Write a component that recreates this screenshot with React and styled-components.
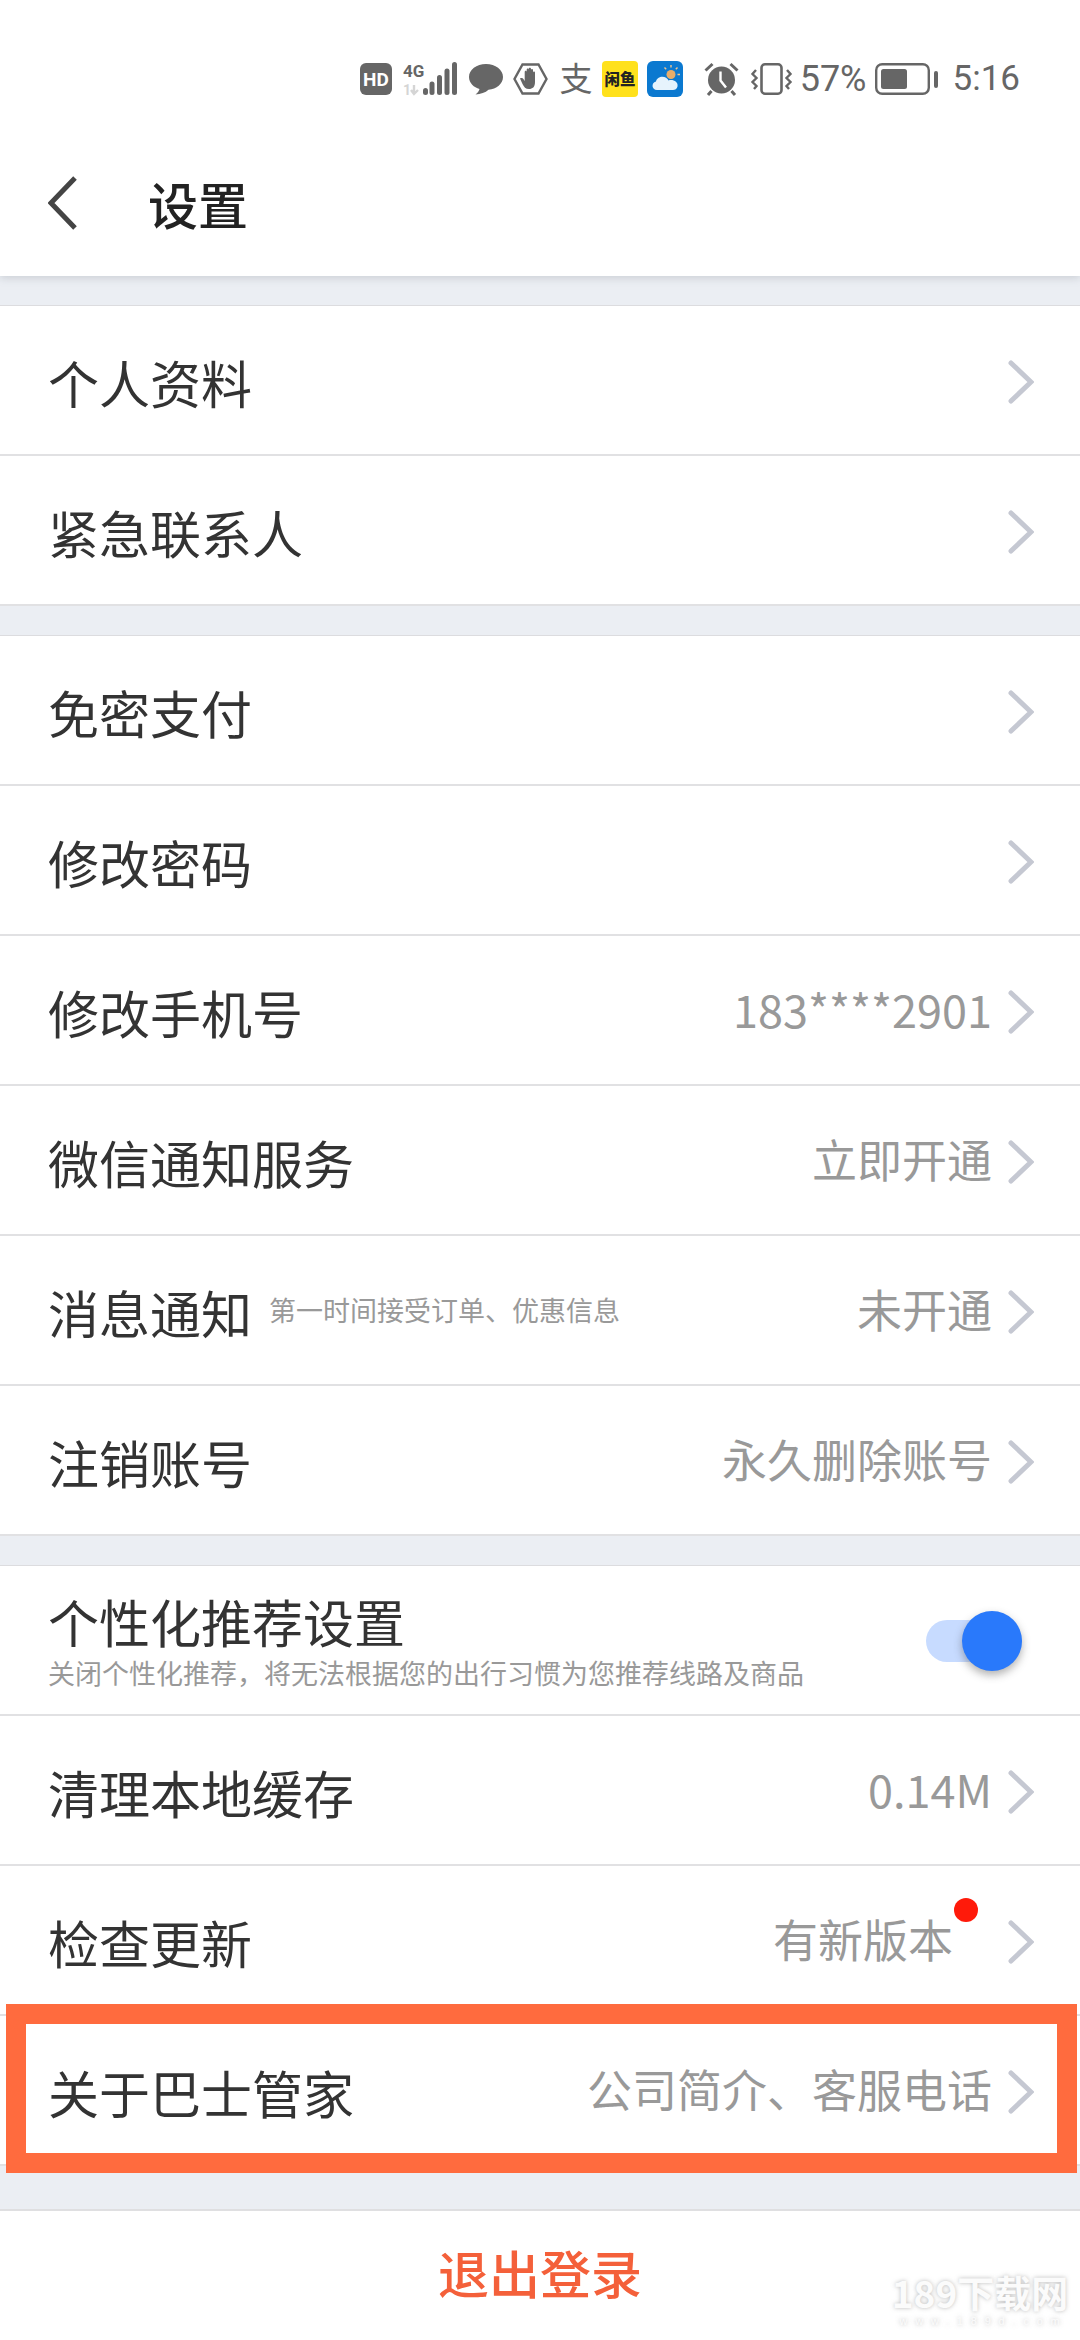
import React from "react";
import styled, { createGlobalStyle } from "styled-components";

const Global = createGlobalStyle`
  html, body { margin: 0; padding: 0; background: #ebeef3; }
  body { font-family: "Noto Sans CJK SC", "Noto Sans", sans-serif; }
  * { box-sizing: border-box; }
`;

const Page = styled.div`
  position: relative;
  width: 1080px;
  height: 2340px;
  overflow: hidden;
  background: #ebeef3;
  display: flex;
  flex-direction: column;
`;

const Header = styled.header`
  height: 276px;
  background: #fff;
  box-shadow: 0 2px 8px rgba(120, 125, 135, 0.28);
  position: relative;
  z-index: 2;
  display: flex;
  flex-direction: column;
`;

const StatusBar = styled.div`
  height: 130px;
  padding: 28px 60px 0 0;
  display: flex;
  justify-content: flex-end;
  align-items: center;
  color: #666;
`;

const StatusSvg = styled.svg`
  display: block;
  flex: none;
  overflow: visible;
  margin-left: ${(p) => p.$ml || 0}px;
`;

const StatusText = styled.span`
  font-family: "Roboto", "Noto Sans", sans-serif;
  font-size: ${(p) => p.$size || 36}px;
  line-height: 44px;
  color: #666;
  margin-left: ${(p) => p.$ml || 0}px;
`;

const NavBar = styled.div`
  height: 146px;
  padding: 0 0 0 48px;
  display: flex;
  align-items: center;
`;

const BackSvg = styled.svg`
  display: block;
  flex: none;
`;

const Title = styled.h1`
  margin: 0 0 0 70px;
  font-size: 50px;
  line-height: 60px;
  font-weight: 500;
  color: #222;
`;

const Group = styled.section`
  background: #fff;
  margin-top: 29px;
  border-top: 1px solid #dcdcdf;
`;

const Row = styled.div`
  position: relative;
  height: 150px;
  padding: 0 46px 0 48px;
  display: flex;
  align-items: center;
  justify-content: space-between;
  border-bottom: 2px solid #e1e1e3;
`;

const Label = styled.span`
  font-size: 51px;
  line-height: 60px;
  color: #333;
  white-space: nowrap;
  margin-top: 3px;
`;

const LabelGroup = styled.div`
  display: flex;
  align-items: center;
`;

const Hint = styled.span`
  font-size: 27px;
  line-height: 40px;
  color: #999;
  margin: 0 0 0 17px;
  white-space: nowrap;
`;

const Stack = styled.div`
  display: flex;
  flex-direction: column;
  margin-top: 3px;
`;

const StackLabel = styled(Label)`
  margin-top: 0;
`;

const StackHint = styled.span`
  font-size: 27px;
  line-height: 40px;
  margin-top: 2px;
  color: #999;
  white-space: nowrap;
`;

const RightSide = styled.div`
  display: flex;
  align-items: center;
`;

const Value = styled.span`
  position: relative;
  margin-right: ${(p) => p.$mr || 16}px;
  font-size: 45px;
  line-height: 60px;
  color: #999;
  white-space: nowrap;
  margin-top: -3px;
`;

const Dot = styled.i`
  position: absolute;
  right: -25px;
  top: -11px;
  width: 24px;
  height: 24px;
  border-radius: 50%;
  background: #ff1a0a;
`;

const Toggle = styled.div`
  position: relative;
  width: 96px;
  height: 42px;
  margin: 2px 12px 0 0;
  border-radius: 21px;
  background: #c7dbff;
`;

const Thumb = styled.i`
  position: absolute;
  right: 0;
  top: -9px;
  width: 60px;
  height: 60px;
  border-radius: 50%;
  background: #2979fb;
  box-shadow: 0 4px 8px rgba(60, 60, 60, 0.4);
`;

const Highlight = styled.div`
  position: absolute;
  left: 6px;
  right: 3px;
  top: -12px;
  bottom: -9px;
  border: 20px solid #ff6b3e;
  pointer-events: none;
`;

const LastRowWrap = styled.div`
  position: relative;
  z-index: 1;
`;

const Logout = styled.div`
  margin-top: 43px;
  flex: 1;
  background: #fff;
  border-top: 2px solid #dfdfe1;
  display: flex;
  justify-content: center;
  padding-top: 31px;
  font-size: 51px;
  line-height: 60px;
  font-weight: 500;
  color: #f4603a;
`;

const Watermark = styled.div`
  position: absolute;
  left: 894px;
  top: 2270px;
  width: 172px;
  display: flex;
  flex-direction: column;
  align-items: center;
  color: #fbfbfb;
  text-shadow: 0 0 4px rgba(120, 120, 120, 0.5);
  pointer-events: none;
`;

const WmMain = styled.span`
  font-family: "Noto Sans CJK SC", sans-serif;
  font-size: 37px;
  line-height: 44px;
  font-weight: 700;
  white-space: nowrap;
`;

const WmSub = styled.span`
  font-family: "Liberation Sans", sans-serif;
  font-size: 11px;
  line-height: 14px;
  letter-spacing: 7.8px;
  white-space: nowrap;
  margin-right: -7px;
`;

const ChevronSvg = styled.svg`
  display: block;
  flex: none;
  margin-top: 3px;
`;

const Chevron = () => (
  <ChevronSvg width="26" height="44" viewBox="0 0 26 44">
    <path d="M3 3 L23 22 L3 41" fill="none" stroke="#c5c8d2" strokeWidth="5" strokeLinecap="round" />
  </ChevronSvg>
);

const BackIcon = () => (
  <BackSvg width="30" height="54" viewBox="0 0 30 54">
    <path d="M27 2 L3 27 L27 52" fill="none" stroke="#444" strokeWidth="5" />
  </BackSvg>
);

const G = "#666";

const StatusIcons = () => (
  <>
    <StatusSvg width="32" height="32" viewBox="0 0 32 32">
      <rect width="32" height="32" rx="6" fill={G} />
      <text x="16" y="23" textAnchor="middle" fontFamily="Roboto, sans-serif" fontWeight="700" fontSize="19" fill="#fff">HD</text>
    </StatusSvg>
    <StatusSvg $ml={11} width="54" height="34" viewBox="0 0 54 34">
      <text x="0" y="15" fontFamily="Roboto, sans-serif" fontWeight="700" fontSize="17" fill={G}>4G</text>
      <text x="0" y="33" fontFamily="Roboto, sans-serif" fontWeight="700" fontSize="14" fill="#d5d5d5">1</text>
      <path d="M11 23 V32 M8 28 L11 32 L15 28" fill="none" stroke="#d5d5d5" strokeWidth="2.4" />
      <rect x="20" y="26" width="5" height="7" rx="2.5" fill={G} />
      <rect x="26.5" y="19.5" width="5" height="13.5" rx="2.5" fill={G} />
      <rect x="34" y="13" width="5" height="20" rx="2.5" fill={G} />
      <rect x="41.5" y="6.5" width="5" height="26.5" rx="2.5" fill={G} />
      <rect x="49" y="0" width="5" height="33" rx="2.5" fill={G} />
    </StatusSvg>
    <StatusSvg $ml={12} width="34" height="32" viewBox="0 0 34 32">
      <path d="M17 1 C7.5 1 0 6.8 0 14 C0 20 5 24.5 10.5 26 C10 28 8.5 30 6.5 31.5 C11.5 31.5 16.5 29.5 19.5 26.8 C27.5 26 34 20.8 34 14 C34 6.8 26.5 1 17 1 Z" fill={G} />
    </StatusSvg>
    <StatusSvg $ml={10} width="35" height="32" viewBox="0 0 35 32">
      <path d="M9.5 1.5 H25.5 L33.5 16 L25.5 30.5 H9.5 L1.5 16 Z" fill="none" stroke={G} strokeWidth="2.4" />
      <path d="M7 15.5 C8.5 14.5 10 15 11 17 L11.7 18 V9 C11.7 7.4 13.7 7.4 13.7 9 V6.8 C13.7 5.2 15.7 5.2 15.7 6.8 V6 C15.7 4.4 18 4.4 18 6 V7 C18 5.5 20 5.5 20 7 V9.5 C20 8 22 8 22 9.5 V19 C22 24 19.5 26 16 26 C12.5 26 11 24 9.5 21 Z" fill={G} />
    </StatusSvg>
    <StatusSvg $ml={11} width="34" height="34" viewBox="0 0 34 34">
      <text x="17" y="29" textAnchor="middle" fontFamily="'Noto Sans CJK SC', sans-serif" fontWeight="400" fontSize="33" fill={G}>支</text>
    </StatusSvg>
    <StatusSvg $ml={9} width="36" height="36" viewBox="0 0 36 36">
      <rect width="36" height="36" rx="4" fill="#ffe11c" />
      <text x="18" y="24" textAnchor="middle" fontFamily="'Noto Sans CJK SC', sans-serif" fontWeight="900" fontSize="15.5" fill="#222">闲鱼</text>
    </StatusSvg>
    <StatusSvg $ml={9} width="36" height="36" viewBox="0 0 36 36">
      <rect width="36" height="36" rx="6" fill="#0b79d0" />
      <circle cx="24" cy="13.5" r="4.5" fill="#e7ad6a" />
      <path d="M24 4 V6.5 M30.5 6.5 L28.8 8.3 M33 13.5 H30.5 M17.5 6.5 L19.2 8.3" stroke="#f0c58f" strokeWidth="1.4" />
      <path d="M10 29 C4.5 29 4 21.5 9 20.5 C10 14.5 19.5 14 21.5 19.5 C26 18 31.5 21 30.5 25.5 C30 28 28 29 26 29 Z" fill="#e6f3fc" />
    </StatusSvg>
    <StatusSvg $ml={21} width="35" height="34" viewBox="0 0 35 34">
      <circle cx="17.5" cy="18" r="13.5" fill={G} />
      <path d="M16.5 9.5 V18.5 L22 25.5" fill="none" stroke="#fff" strokeWidth="2.4" />
      <path d="M1.5 8.5 L8.5 2 M33.5 8.5 L26.5 2 M7.5 29 L4 33 M27.5 29 L31 33" fill="none" stroke={G} strokeWidth="3" />
    </StatusSvg>
    <StatusSvg $ml={12} width="41" height="32" viewBox="0 0 41 32">
      <rect x="10.5" y="1.3" width="20" height="29.4" rx="3.5" fill="none" stroke={G} strokeWidth="2.6" />
      <path d="M5 7 L1.5 11 L5.5 15 L1.5 19 L5.5 23 L3 26 M36 7 L39.5 11 L35.5 15 L39.5 19 L35.5 23 L38 26" fill="none" stroke={G} strokeWidth="2.4" />
    </StatusSvg>
    <StatusText $ml={8}>57%</StatusText>
    <StatusSvg $ml={8} width="63" height="32" viewBox="0 0 63 32">
      <rect x="1.2" y="1.2" width="52.6" height="29.6" rx="6" fill="none" stroke={G} strokeWidth="2.4" />
      <rect x="6" y="6" width="26" height="20" rx="2.5" fill={G} />
      <rect x="59" y="8" width="4" height="17" rx="2" fill={G} />
    </StatusSvg>
    <StatusText $ml={15} $size={35}>5:16</StatusText>
  </>
);

const Item = ({ label, hint, value, mr, dot, children }) => (
  <Row>
    <LabelGroup>
      <Label>{label}</Label>
      {hint && <Hint>{hint}</Hint>}
    </LabelGroup>
    <RightSide>
      {value && <Value $mr={mr}>{value}{dot && <Dot />}</Value>}
      <Chevron />
    </RightSide>
    {children}
  </Row>
);

export default function App() {
  return (
    <Page>
      <Global />
      <Header>
        <StatusBar><StatusIcons /></StatusBar>
        <NavBar>
          <BackIcon />
          <Title>设置</Title>
        </NavBar>
      </Header>

      <Group>
        <Item label="个人资料" />
        <Item label="紧急联系人" />
      </Group>

      <Group>
        <Item label="免密支付" />
        <Item label="修改密码" />
        <Item label="修改手机号" value="183****2901" />
        <Item label="微信通知服务" value="立即开通" />
        <Item label="消息通知" hint="第一时间接受订单、优惠信息" value="未开通" />
        <Item label="注销账号" value="永久删除账号" />
      </Group>

      <Group>
        <Row>
          <Stack>
            <StackLabel>个性化推荐设置</StackLabel>
            <StackHint>关闭个性化推荐，将无法根据您的出行习惯为您推荐线路及商品</StackHint>
          </Stack>
          <Toggle><Thumb /></Toggle>
        </Row>
        <Item label="清理本地缓存" value="0.14M" />
        <Item label="检查更新" value="有新版本" mr={55} dot />
        <LastRowWrap>
          <Item label="关于巴士管家" value="公司简介、客服电话">
            <Highlight />
          </Item>
        </LastRowWrap>
      </Group>

      <Logout>退出登录</Logout>

      <Watermark>
        <WmMain>189下载网</WmMain>
        <WmSub>www.189d.com</WmSub>
      </Watermark>
    </Page>
  );
}
